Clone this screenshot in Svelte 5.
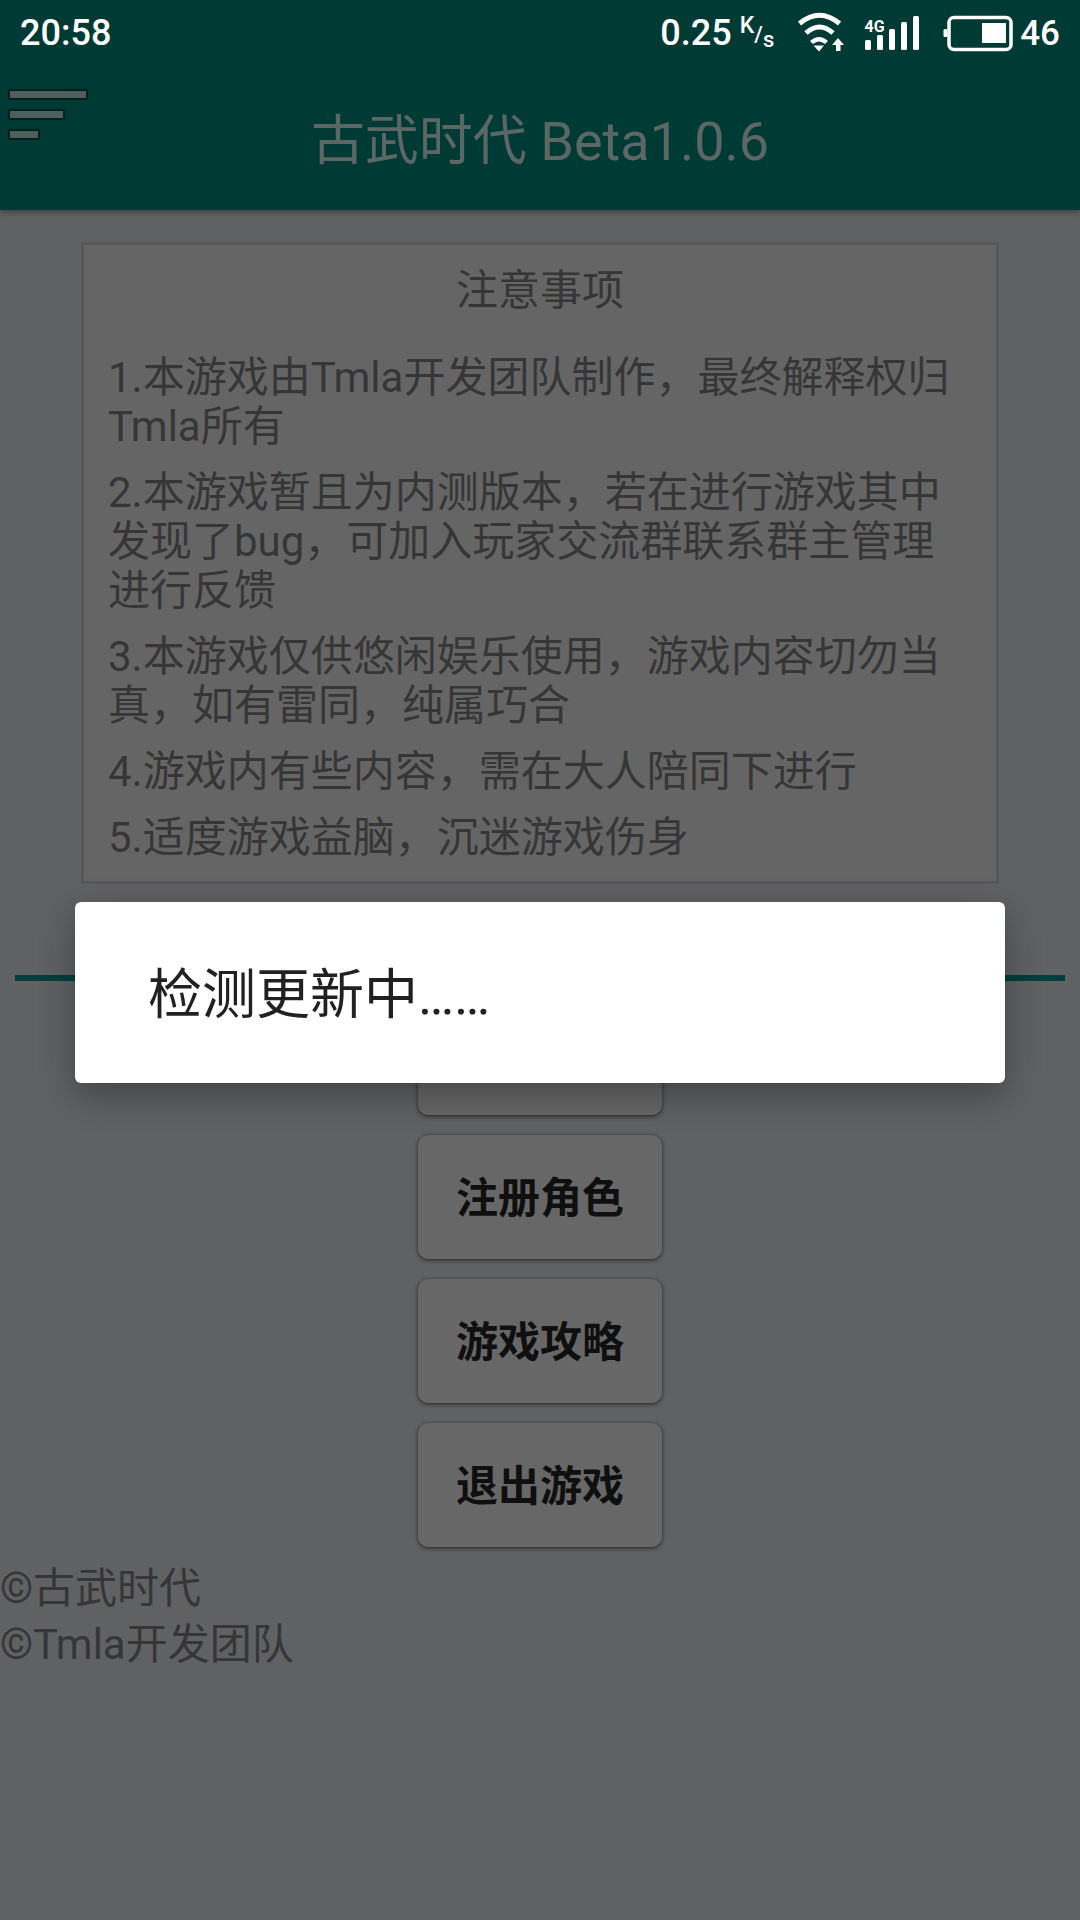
<script>
	const notes = [
		['1.本游戏由Tmla开发团队制作，最终解释权归', 'Tmla所有'],
		['2.本游戏暂且为内测版本，若在进行游戏其中', '发现了bug，可加入玩家交流群联系群主管理', '进行反馈'],
		['3.本游戏仅供悠闲娱乐使用，游戏内容切勿当', '真，如有雷同，纯属巧合'],
		['4.游戏内有些内容，需在大人陪同下进行'],
		['5.适度游戏益脑，沉迷游戏伤身']
	];
	const menu = ['开始游戏', '注册角色', '游戏攻略', '退出游戏'];
	// signal bars: x, top
	const bars = [[867, 40], [879, 35], [891, 29], [903, 22], [915, 16]];
</script>

<main>
	<header>
		<div class="status">
			<span class="time">20:58</span>
			<span class="speed">0.25<span class="k">K</span><span class="slash">/</span><span class="s">s</span></span>
			<svg class="wifi" width="50" height="66" viewBox="797 0 50 66">
				<g fill="none" stroke="#fff" stroke-width="5">
					<path d="M801.5 23.5Q821.5 7 841.5 23.5" />
					<path d="M808 33Q821.5 21 835 33" />
				</g>
				<path d="M812 41Q821 33 830 41L827 44Q821 39 815 44Z" fill="#fff" />
				<path d="M815.5 45.5H826L821 51.5Z" fill="#fff" />
				<path d="M834 45L840 38L846 45H842.5V51H838V45Z" fill="#fff" />
			</svg>
			<svg class="signal" width="58" height="66" viewBox="865 0 58 66">
				<text x="866.5" y="32" class="net">4G</text>
				{#each bars as [x, top]}
					<rect {x} y={top} width="6" height={50 - top} rx="1.5" fill="#fff" />
				{/each}
			</svg>
			<svg class="battery" width="73" height="66" viewBox="943 0 73 66">
				<rect x="951" y="17.5" width="62" height="32" rx="5" fill="none" stroke="#fff" stroke-width="3.5" />
				<rect x="945.5" y="29" width="4" height="8" rx="1.5" fill="#fff" />
				<rect x="984" y="23" width="24" height="20" fill="#fff" />
			</svg>
			<span class="level">46</span>
		</div>
		<div class="toolbar">
			<div class="burger">
				<i class="b1"></i>
				<i class="b2"></i>
				<i class="b3"></i>
			</div>
			<h1>古武时代 Beta1.0.6</h1>
		</div>
	</header>

	<section class="card">
		<h2>注意事项</h2>
		{#each notes as lines}
			<div class="note">
				{#each lines as line}
					<div class="line">{line}</div>
				{/each}
			</div>
		{/each}
	</section>

	<div class="divider"></div>

	<nav>
		{#each menu as item}
			<button>{item}</button>
		{/each}
	</nav>

	<footer>
		<div>©古武时代</div>
		<div>©Tmla开发团队</div>
	</footer>

	<div class="dialog"><span>检测更新中……</span></div>
</main>

<style>
	:global(body) {
		background: #606163;
	}

	main {
		position: relative;
		height: 1920px;
		overflow: hidden;
		font-family: Roboto, "Noto Sans CJK SC", sans-serif;
		background: #606163;
	}

	header {
		background: #003a35;
		box-shadow: 0 3px 5px rgba(0, 0, 0, 0.3);
	}

	.status {
		display: flex;
		align-items: center;
		height: 66px;
		padding: 0 20px 0 20px;
		color: #fff;
		font-weight: 500;
		font-size: 36px;
	}

	.time {
		margin-right: auto;
	}

	.speed {
		margin-right: 21px;
		white-space: nowrap;
	}

	.k {
		margin-left: 8px;
		font-size: 23px;
		vertical-align: 12px;
	}

	.slash {
		font-size: 22px;
		vertical-align: 3px;
	}

	.s {
		font-size: 22px;
		vertical-align: -2px;
	}

	.wifi {
		margin-right: 18px;
	}

	.signal {
		margin-right: 20px;
	}

	.net {
		font-size: 16px;
		font-weight: 700;
		fill: #fff;
	}

	.battery {
		margin-right: 6px;
	}

	.level {
		font-size: 35px;
	}

	.toolbar {
		display: grid;
		grid-template-columns: 1fr auto 1fr;
		height: 144px;
	}

	.burger {
		display: flex;
		flex-direction: column;
		gap: 9px;
		padding: 23px 0 0 8px;
	}

	.burger i {
		display: block;
		height: 7px;
		background: #4f5f5d;
		border: 2px solid #00201e;
	}

	.b1 {
		width: 76px;
	}

	.b2 {
		width: 53px;
	}

	.b3 {
		width: 28px;
	}

	h1 {
		grid-column: 2;
		margin: 6px 0 0;
		align-self: center;
		font-size: 54px;
		font-weight: 400;
		color: #5a6764;
		white-space: nowrap;
		line-height: 140px;
	}

	.card {
		box-sizing: border-box;
		width: 918px;
		height: 642px;
		margin: 32px 0 0 81px;
		padding: 18px 0 0 24px;
		background: #656565;
		border: 3px solid #575758;
		color: #363636;
		font-size: 42px;
		line-height: 49px;
	}

	h2 {
		margin: 0 0 34px -24px;
		text-align: center;
		font-size: 42px;
		font-weight: 400;
		line-height: 56px;
	}

	.note {
		margin-bottom: 17px;
	}

	.line {
		white-space: nowrap;
	}

	.divider {
		height: 6px;
		margin: 91px 15px 0;
		background: #003f3c;
	}

	nav {
		display: flex;
		flex-direction: column;
		align-items: center;
		gap: 20px;
		margin-top: 10px;
	}

	button {
		width: 244px;
		height: 124px;
		padding: 0 0 5px;
		border: none;
		border-radius: 10px;
		background: #676767;
		box-shadow: 0 2px 5px rgba(0, 0, 0, 0.4), 0 0 3px rgba(0, 0, 0, 0.35);
		color: #0f0f0f;
		font-family: inherit;
		font-size: 42px;
		font-weight: 700;
	}

	footer {
		margin-top: 14px;
		color: #363636;
		font-size: 42px;
		line-height: 56px;
	}

	.dialog {
		position: absolute;
		left: 75px;
		top: 902px;
		box-sizing: border-box;
		display: flex;
		align-items: center;
		width: 930px;
		height: 181px;
		padding: 0 0 5px 73px;
		background: #fff;
		border-radius: 6px;
		box-shadow: 0 12px 36px rgba(0, 0, 0, 0.32);
		color: #212121;
		font-size: 54px;
	}
</style>
